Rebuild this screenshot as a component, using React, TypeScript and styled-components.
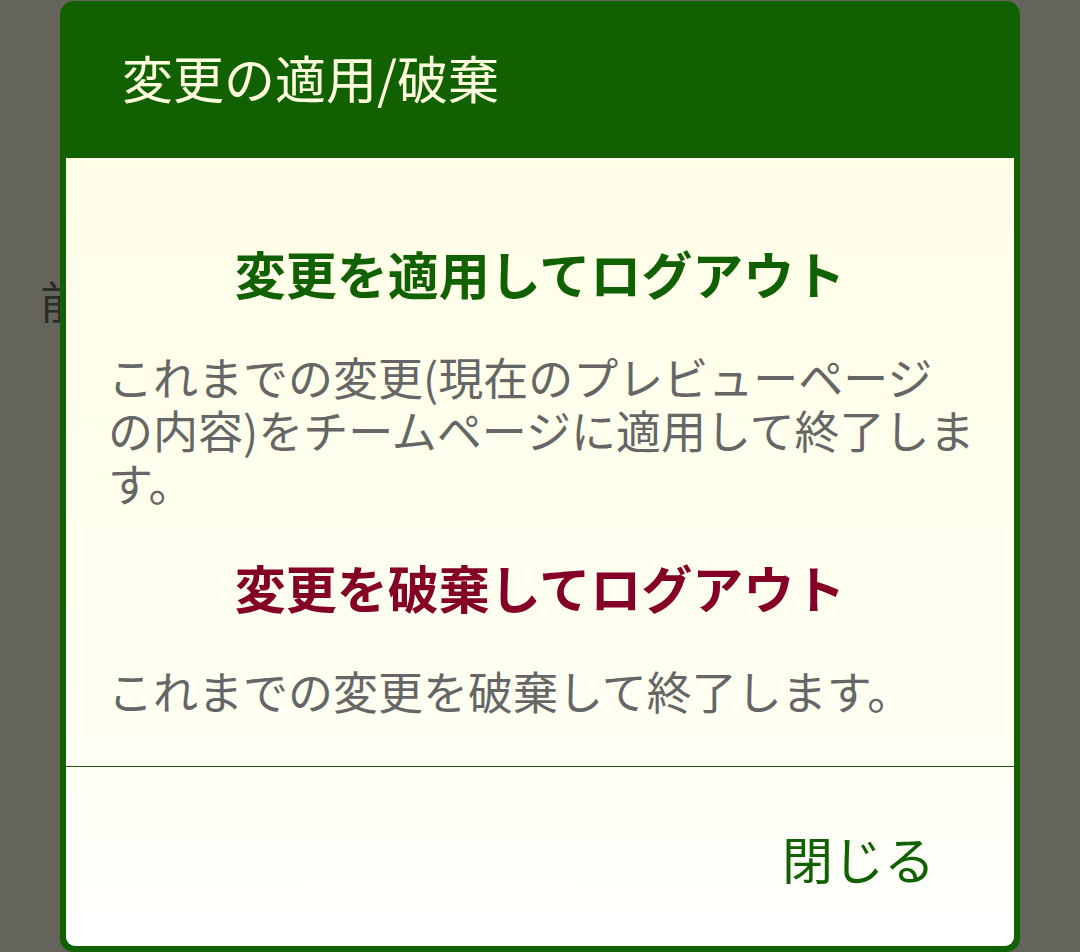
import styled, { createGlobalStyle } from "styled-components";

const GlobalStyle = createGlobalStyle`
  html, body {
    margin: 0;
    background: #64645a;
    font-family: "Noto Sans CJK JP", "Noto Sans", sans-serif;
  }
`;

export default function App() {
  return (
    <>
      <GlobalStyle />
      <Page>
        <PageText>前回の変更</PageText>
      </Page>
      <Modal>
        <Header>変更の適用/破棄</Header>
        <Body>
          <Action $color="#116100">変更を適用してログアウト</Action>
          <Desc>
            これまでの変更(現在のプレビューページ
            <br />
            の内容)をチームページに適用して終了します。
          </Desc>
          <Action $color="#850026">変更を破棄してログアウト</Action>
          <Desc>これまでの変更を破棄して終了します。</Desc>
        </Body>
        <Footer>
          <CloseButton>閉じる</CloseButton>
        </Footer>
      </Modal>
    </>
  );
}

const Page = styled.div`
  height: 952px;
  padding: 270px 0 0 40px;
  box-sizing: border-box;
`;

const PageText = styled.div`
  font-size: 44px;
  line-height: 60px;
  color: #2c2c28;
`;

const Modal = styled.div`
  position: fixed;
  left: 60px;
  top: 1px;
  width: 960px;
  height: 951px;
  box-sizing: border-box;
  display: flex;
  flex-direction: column;
  padding: 0 6px 6px;
  background: #116100;
  border-radius: 14px;
`;

const Header = styled.div`
  height: 157px;
  box-sizing: border-box;
  flex-shrink: 0;
  display: flex;
  align-items: center;
  padding: 0 0 6px 56px;
  font-size: 51px;
  color: #ffffe0;
`;

const Body = styled.div`
  padding: 37px 28px 49px 42px;
  background: linear-gradient(#ffffe8, #fffff3);
  border-bottom: 1px solid #24501a;
`;

const Action = styled.div<{ $color: string }>`
  margin: 48px 14px 47px 0;
  font-size: 51px;
  line-height: 60px;
  font-weight: bold;
  text-align: center;
  color: ${(p) => p.$color};

  &:nth-of-type(3) {
    margin-bottom: 46px;
  }
`;

const Desc = styled.p`
  margin: 0;
  font-size: 45px;
  line-height: 53px;
  color: #666666;
`;

const Footer = styled.div`
  flex: 1;
  display: flex;
  align-items: center;
  justify-content: flex-end;
  padding: 0 79px 0 0;
  background: linear-gradient(#fffff3, #ffffff);
  border-radius: 0 0 9px 9px;
`;

const CloseButton = styled.button`
  border: none;
  background: none;
  padding: 0;
  margin-top: 2px;
  font-family: inherit;
  font-size: 51px;
  color: #116100;
`;
